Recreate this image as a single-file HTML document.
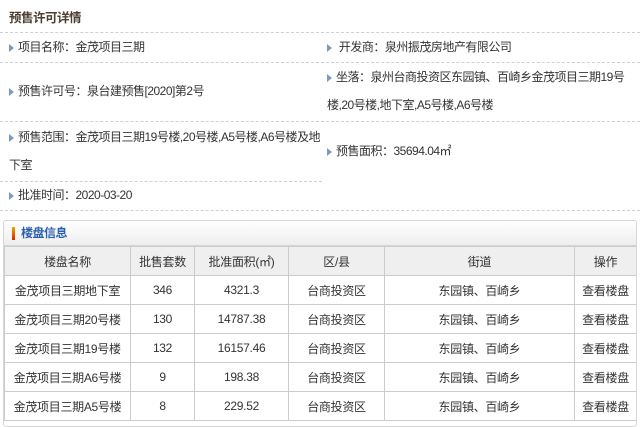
<!DOCTYPE html>
<html><head><meta charset="utf-8"><style>
body{margin:0;width:640px;height:423px;background:#fff;font-family:"Liberation Sans","Noto Sans CJK SC",sans-serif;font-size:12px;color:#333;position:relative;overflow:hidden}
.a{position:absolute;white-space:nowrap;line-height:14px;letter-spacing:-0.5px}
.d{position:absolute;left:0;width:640px;border-top:1px dashed #d0d0d0;height:0}
.ar{display:inline-block;width:0;height:0;border-left:5px solid #7a9cc4;border-top:4px solid transparent;border-bottom:4px solid transparent;margin-right:4px;vertical-align:-1px}
.panel{position:absolute;left:3px;top:220px;width:632px;height:205px;border:1px solid #d6d6d6;border-radius:3px;overflow:hidden}
.bar{height:24px;background:linear-gradient(#fff,#eee);border-bottom:1px solid #d6d6d6;position:relative}
table{border-collapse:collapse;width:632px;table-layout:fixed;letter-spacing:-0.3px}
td,th{border:1px solid #ccc;text-align:center;font-weight:normal;height:28px;padding:0}
th{background:#efefef;height:28px}
</style></head><body>
<div class="a" style="left:9px;top:11px;font-weight:bold;color:#4d4033;font-size:12.5px">预售许可详情</div>
<div class="d" style="top:32px"></div>
<div class="a" style="left:9px;top:40px"><span class="ar"></span>项目名称：金茂项目三期</div>
<div class="a" style="left:327px;top:40px"><span class="ar"></span> 开发商：泉州振茂房地产有限公司</div>
<div class="d" style="top:62px"></div>
<div class="a" style="left:9px;top:84px"><span class="ar"></span>预售许可号：泉台建预售[2020]第2号</div>
<div class="a" style="left:327px;top:70px"><span class="ar"></span>坐落：泉州台商投资区东园镇、百崎乡金茂项目三期19号</div>
<div class="a" style="left:327px;top:98px">楼,20号楼,地下室,A5号楼,A6号楼</div>
<div class="d" style="top:121px"></div>
<div class="a" style="left:9px;top:130px"><span class="ar"></span>预售范围：金茂项目三期19号楼,20号楼,A5号楼,A6号楼及地</div>
<div class="a" style="left:9px;top:158px">下室</div>
<div class="a" style="left:327px;top:144px"><span class="ar"></span>预售面积：35694.04㎡</div>
<div class="d" style="top:181px;width:322px"></div>
<div class="a" style="left:9px;top:188px"><span class="ar"></span>批准时间：2020-03-20</div>
<div class="d" style="top:210px"></div>
<div class="panel">
<div class="bar"><span style="position:absolute;left:8px;top:6px;width:3px;height:13px;background:linear-gradient(#f2a600,#d42a00)"></span><span class="a" style="left:17px;top:5px;font-weight:bold;color:#2a5fae">楼盘信息</span></div>
<table>
<colgroup><col style="width:126px"><col style="width:64px"><col style="width:94px"><col style="width:96px"><col style="width:190px"><col style="width:62px"></colgroup>
<tr><th>楼盘名称</th><th>批售套数</th><th>批准面积(㎡)</th><th>区/县</th><th>街道</th><th>操作</th></tr>
<tr><td>金茂项目三期地下室</td><td>346</td><td>4321.3</td><td>台商投资区</td><td>东园镇、百崎乡</td><td>查看楼盘</td></tr>
<tr><td>金茂项目三期20号楼</td><td>130</td><td>14787.38</td><td>台商投资区</td><td>东园镇、百崎乡</td><td>查看楼盘</td></tr>
<tr><td>金茂项目三期19号楼</td><td>132</td><td>16157.46</td><td>台商投资区</td><td>东园镇、百崎乡</td><td>查看楼盘</td></tr>
<tr><td>金茂项目三期A6号楼</td><td>9</td><td>198.38</td><td>台商投资区</td><td>东园镇、百崎乡</td><td>查看楼盘</td></tr>
<tr><td>金茂项目三期A5号楼</td><td>8</td><td>229.52</td><td>台商投资区</td><td>东园镇、百崎乡</td><td>查看楼盘</td></tr>
</table></div>
</body></html>
